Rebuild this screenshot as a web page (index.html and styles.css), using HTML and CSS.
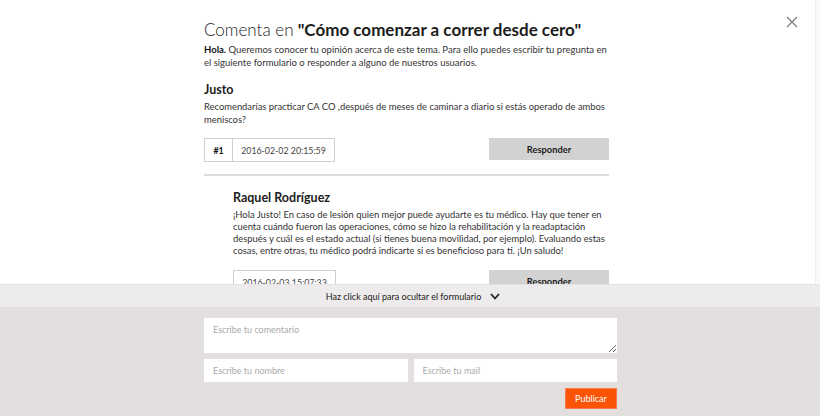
FILE: index.html
```html
<!DOCTYPE html>
<html lang="es">
<head>
    <meta charset="UTF-8">
    <title>Comenta en "Cómo comenzar a correr desde cero"</title>
    <link rel="stylesheet" href="styles.css">
</head>
<body>
    <div class="scroll-track"></div>
    <button class="close" aria-label="Cerrar">
        <svg width="12" height="12" viewBox="0 0 12 12"><path d="M1 1 L11 11 M11 1 L1 11" stroke="#777" stroke-width="1.1" fill="none"/></svg>
    </button>

    <div class="container">
        <h1><span class="light">Comenta en</span> "Cómo comenzar a correr desde cero"</h1>
        <p class="intro"><b>Hola.</b> Queremos conocer tu opinión acerca de este tema. Para ello puedes escribir tu pregunta en el siguiente formulario o responder a alguno de nuestros usuarios.</p>

        <!-- comentario -->
        <div class="comment">
            <h2>Justo</h2>
            <p class="text">Recomendarías practicar CA CO ,después de meses de caminar a diario si estás operado de ambos meniscos?</p>
            <div class="meta">
                <div class="stamp"><span class="num">#1</span><span class="date">2016-02-02 20:15:59</span></div>
                <button class="reply-btn">Responder</button>
            </div>
        </div>

        <!-- respuesta -->
        <div class="comment reply">
            <h2>Raquel Rodríguez</h2>
            <p class="text">¡Hola Justo! En caso de lesión quien mejor puede ayudarte es tu médico. Hay que tener en cuenta cuándo fueron las operaciones, cómo se hizo la rehabilitación y la readaptación después y cuál es el estado actual (si tienes buena movilidad, por ejemplo). Evaluando estas cosas, entre otras, tu médico podrá indicarte si es beneficioso para ti. ¡Un saludo!</p>
            <div class="meta">
                <div class="stamp"><span class="date">2016-02-03 15:07:33</span></div>
                <button class="reply-btn">Responder</button>
            </div>
        </div>
    </div>

    <!-- formulario fijo -->
    <div class="form-panel">
        <div class="toggle"><span>Haz click aquí para ocultar el formulario</span>
            <svg width="10" height="7" viewBox="0 0 10 7"><path d="M1 1 L5 5.5 L9 1" stroke="#222" stroke-width="1.8" fill="none"/></svg>
        </div>
        <form class="form">
            <textarea placeholder="Escribe tu comentario"></textarea>
            <div class="row">
                <input type="text" placeholder="Escribe tu nombre">
                <input type="text" placeholder="Escribe tu mail">
            </div>
            <div class="actions">
                <button type="button" class="publish">Publicar</button>
            </div>
        </form>
    </div>
</body>
</html>
```

FILE: styles.css
```css
* {
    box-sizing: border-box;
}
body {
    margin: 0;
    background: #fff;
    font-family: Lato, 'Open Sans', Arial, sans-serif;
    color: #2a2a2a;
}
.scroll-track {
    position: fixed;
    top: 0;
    right: 0;
    width: 5px;
    height: 100%;
    background: #fafafa;
    border-left: 1px solid #eeeeee;
}
.close {
    position: fixed;
    top: 16px;
    right: 22px;
    padding: 0;
    border: none;
    background: none;
}
.container {
    width: 405px;
    margin-left: 204px;
    padding-top: 20px;
}
h1 {
    margin: 0;
    font-size: 17px;
    font-weight: 700;
    color: #1c1c1c;
    line-height: 20px;
    white-space: nowrap;
}
h1 .light {
    font-weight: 300;
}
.intro {
    margin: 3px 0 0;
    font-size: 9.5px;
    line-height: 13px;
    color: #333;
}
.intro b {
    color: #111;
}
.comment {
    padding-bottom: 12px;
    border-bottom: 2px solid #dcdcdc;
}
.comment h2 {
    margin: 13px 0 0;
    font-size: 12.5px;
    font-weight: 700;
    line-height: 16px;
    color: #1c1c1c;
}
.text {
    margin: 2px 0 0;
    font-size: 9.4px;
    line-height: 13px;
    color: #333;
}
.meta {
    display: flex;
    justify-content: space-between;
    align-items: flex-start;
    margin-top: 12px;
}
.stamp {
    display: flex;
    height: 24px;
    border: 1px solid #cfcfcf;
    font-size: 8.8px;
    color: #444;
}
.stamp span {
    display: flex;
    align-items: center;
    justify-content: center;
}
.num {
    width: 28px;
    border-right: 1px solid #cfcfcf;
    font-weight: 700;
    color: #111;
}
.date {
    width: 101px;
}
.reply-btn {
    width: 120px;
    height: 22px;
    border: none;
    background: #d2d2d2;
    font-family: inherit;
    font-size: 9.3px;
    font-weight: 700;
    color: #1c1c1c;
}
.reply {
    margin-left: 29px;
    border-bottom: none;
}
.reply h2 {
    margin-top: 14px;
}
.reply .text {
    margin-top: 3px;
    line-height: 12px;
}
.reply .meta {
    margin-top: 13px;
}
.form-panel {
    position: fixed;
    left: 0;
    right: 0;
    bottom: 0;
    height: 132px;
    background: #e3dfdf;
}
.toggle {
    display: flex;
    justify-content: center;
    align-items: center;
    gap: 9px;
    height: 23px;
    padding-left: 6px;
    background: #edebeb;
    border-top: 1px solid #e4e2e2;
    font-size: 9px;
    color: #222;
}
.form {
    display: flex;
    flex-direction: column;
    gap: 6px;
    width: 413px;
    margin: 11px 0 0 204px;
}
.form textarea,
.form input {
    border: none;
    background: #fff;
    font-family: inherit;
    font-size: 9px;
    color: #333;
    padding: 0 9px;
}
.form ::placeholder {
    color: #aaa;
}
.form textarea {
    height: 35px;
    padding-top: 6px;
    resize: vertical;
}
.row {
    display: flex;
    gap: 6px;
}
.row input {
    flex: 1;
    height: 23px;
}
.actions {
    display: flex;
    justify-content: flex-end;
}
.publish {
    width: 52px;
    height: 21px;
    border: 1px solid #f47a4a;
    background: #fb5307;
    font-family: inherit;
    font-size: 9px;
    color: #fff;
}
```
